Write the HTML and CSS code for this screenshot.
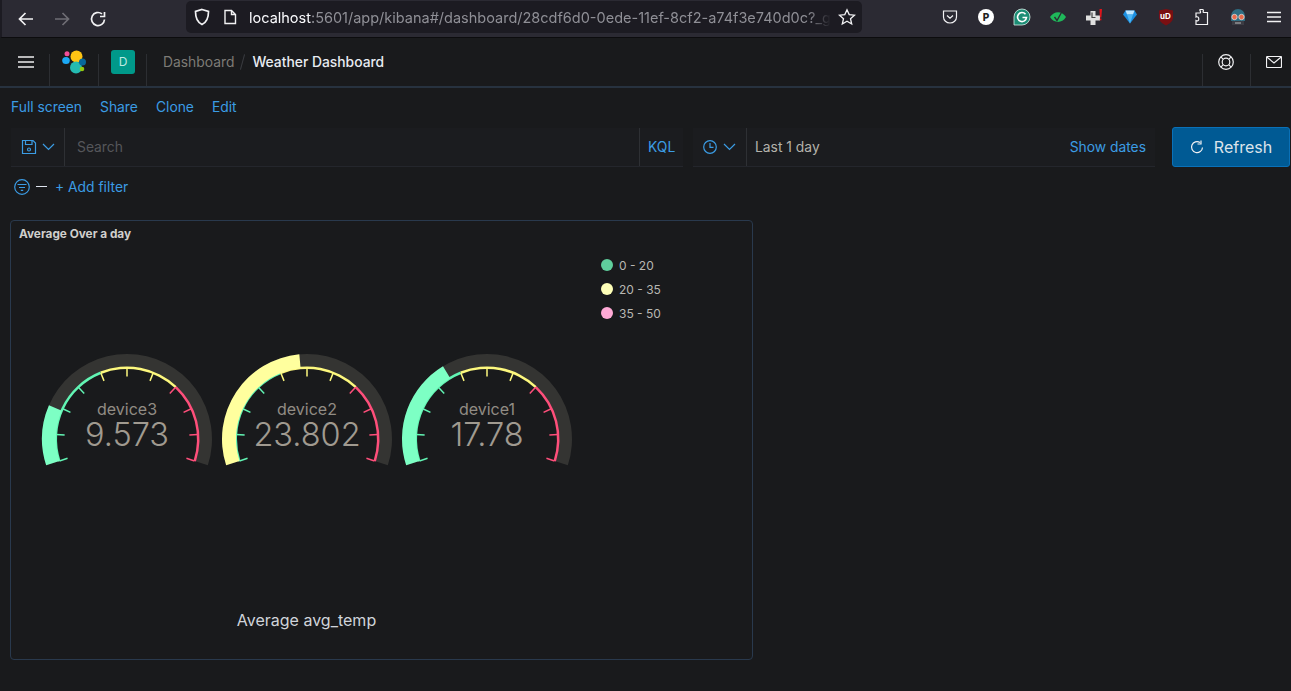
FILE: index.html
```html
<!DOCTYPE html>
<html lang="en">
<head>
    <meta charset="UTF-8">
    <title>Weather Dashboard - Kibana</title>
    <link rel="stylesheet" href="styles.css">
</head>
<body>

<!-- Browser toolbar -->
<div class="browser-bar">
    <div class="nav-btn"><svg width="18" height="18" viewBox="0 0 18 18" class="ico"><path d="M16 9H2.500M8.500 3 2.500 9l6 6"/></svg></div>
    <div class="nav-btn dim"><svg width="18" height="18" viewBox="0 0 18 18" class="ico"><path d="M2 9h13.500M9.500 3l6 6-6 6"/></svg></div>
    <div class="nav-btn"><svg width="18" height="18" viewBox="0 0 18 18" class="ico"><path d="M15.500 9.500A6.500 6.500 0 1 1 13 3.900M15.500 2v4.500H11"/></svg></div>
    <div class="url-bar">
        <svg width="16" height="18" viewBox="0 0 16 18" class="ico shield"><path d="M8 1.500 14.500 3.500c0 6-1 10.500-6.500 13C2.500 14 1.500 9.500 1.500 3.500z"/></svg>
        <svg width="14" height="16" viewBox="0 0 14 16" class="ico page"><path d="M2 1.500h6.500L12.500 5.500v9H2zM8.500 1.500v4h4"/></svg>
        <span class="url-text">localhost<span class="url-rest">:5601/app/kibana#/dashboard/28cdf6d0-0ede-11ef-8cf2-a74f3e740d0c?_g</span></span>
        <svg width="18" height="18" viewBox="0 0 18 18" class="ico star"><path d="M9 1.800 11.200 6.600 16.500 7.200 12.500 10.700 13.700 16 9 13.300 4.300 16 5.500 10.700 1.500 7.200 6.800 6.600z"/></svg>
    </div>
    <div class="extensions">
        <div class="nav-btn"><svg width="16" height="16" viewBox="0 0 16 16" class="ico thin"><path d="M1.500 2h13v6a6.500 6 0 0 1-13 0zM5 6.500l3 2.800 3-2.800"/></svg></div>
        <div class="nav-btn"><span class="ext-p">P</span></div>
        <div class="nav-btn"><svg width="18" height="18" viewBox="0 0 18 18"><path d="M1 9a8 8 0 1 1 8 8H1z" fill="#1c8d75" stroke="#d8efe8" stroke-width=".8"/><path d="M12.500 6.200A4.500 4.500 0 1 0 13.500 9.500H9.500" fill="none" stroke="#fff" stroke-width="1.600"/></svg></div>
        <div class="nav-btn"><svg width="18" height="14" viewBox="0 0 18 14"><path d="M1 7c4-6.500 12-6.500 16 0-4 6.500-12 6.500-16 0z" fill="#1fb85a"/><path d="M5.500 7 8 10.500 13 1.500" fill="none" stroke="#2b2a33" stroke-width="1.300"/></svg></div>
        <div class="nav-btn"><svg width="18" height="18" viewBox="0 0 18 18"><path d="M5.500 3h5v4.500H15v5h-4.500V17h-5v-4.500H1v-5h4.500z" fill="#e0e0e0"/><path d="M7 4.500v5h3.500" fill="none" stroke="#444" stroke-width="1.200"/><path d="M14.500 1h2.500l-.6 8.500h-1.500z" fill="#e0141b"/><path d="M14.800 10.500h1.600v1.800h-1.600z" fill="#e0141b"/></svg></div>
        <div class="nav-btn"><svg width="16" height="16" viewBox="0 0 16 16"><path d="M3.500 1.500h9L15 5.500 8 14.500 1 5.500z" fill="#1c8fe0"/><path d="M3.500 1.500h9L11 5.500H5z" fill="#bfe6ff"/><path d="M5 5.500h6L8 14.500z" fill="#4fb8f5"/></svg></div>
        <div class="nav-btn"><svg width="16" height="18" viewBox="0 0 16 18"><path d="M8 1 15 2.500V10c0 3-3.500 5.800-7 7.500C4.500 15.800 1 13 1 10V2.500z" fill="#7a0f12"/></svg><span class="ext-ub">uD</span></div>
        <div class="nav-btn"><svg width="18" height="18" viewBox="0 0 18 18" class="ico thin"><path d="M7 1.500h2.500c1 0 1 1 .7 1.700-.4 1 .2 1.300 1 1.300h3.300v12H3v-4c1.300.7 2.800.3 2.800-1.500S4.300 8.300 3 9V5h3.500c1 0 1.300-.5 1-1.300C7.200 3 6.500 1.500 7 1.500z"/></svg></div>
        <div class="nav-btn"><svg width="18" height="20" viewBox="0 0 18 20"><path d="M2 9a7 7 0 0 1 14 0v5H2z" fill="#2f6d82"/><circle cx="5.500" cy="10" r="2.700" fill="#e86a4a" stroke="#ddd" stroke-width=".8"/><circle cx="12.500" cy="10" r="2.700" fill="#e86a4a" stroke="#ddd" stroke-width=".8"/><path d="M3 14h12v4H3z" fill="#3c3c44"/><path d="M6 16h6" stroke="#bbb"/></svg></div>
        <div class="nav-btn"><svg width="14" height="12" viewBox="0 0 14 12" class="ico menu-ico"><path d="M0 1.500h14M0 6h14M0 10.500h14"/></svg></div>
    </div>
</div>

<!-- Kibana header -->
<div class="app-header">
    <div class="head-cell menu-cell"><svg width="16" height="12" viewBox="0 0 16 12"><path d="M0 1h16M0 6h16M0 11h16" stroke="#eee" stroke-width="1.600"/></svg></div>
    <div class="head-cell logo-cell">
        <svg width="24" height="24" viewBox="0 0 24 24">
            <circle cx="14.500" cy="6.500" r="6" fill="#fec514"/>
            <circle cx="14" cy="17.500" r="6" fill="#24bbb1"/>
            <circle cx="5" cy="3.800" r="2.500" fill="#f04e98"/>
            <ellipse cx="4" cy="10.500" rx="3.800" ry="3.500" fill="#1ba9f5"/>
            <ellipse cx="20.500" cy="12" rx="3.500" ry="3.500" fill="#07689a"/>
            <circle cx="20" cy="19" r="2.300" fill="#93c90e"/>
        </svg>
    </div>
    <div class="head-cell space-cell"><span class="space-badge">D</span></div>
    <nav class="crumbs">
        <a class="crumb-link">Dashboard</a>
        <span class="crumb-sep"></span>
        <span class="crumb-now">Weather Dashboard</span>
    </nav>
    <div class="head-cell right"><svg width="16" height="16" viewBox="0 0 16 16" class="ico thin"><circle cx="8" cy="8" r="7.300"/><circle cx="8" cy="8" r="3.800"/><path d="m2.800 2.800 2.500 2.500M13.200 2.800l-2.500 2.500M2.800 13.200l2.500-2.500M13.200 13.200l-2.500-2.500"/></svg></div>
    <div class="head-cell right last"><svg width="16" height="12" viewBox="0 0 16 12" class="ico thin"><rect x=".5" y=".5" width="15" height="11" rx="1"/><path d="m.8 1 7.200 6 7.200-6"/></svg></div>
</div>

<!-- Top nav links -->
<div class="top-links">
    <a>Full screen</a>
    <a>Share</a>
    <a>Clone</a>
    <a>Edit</a>
</div>

<!-- Query bar -->
<div class="query-bar">
    <div class="query-form">
        <div class="saved-btn">
            <svg width="16" height="16" viewBox="0 0 16 16" class="blue-ico"><path d="M1.500 1.500h10.500l2.500 2.500v10.500h-13zM4.500 1.500v4h6.500v-4"/><circle cx="8" cy="10.500" r="1.500"/></svg>
            <svg width="13" height="8" viewBox="0 0 13 8" class="blue-ico"><path d="m1 1 5.500 5.500L12 1"/></svg>
        </div>
        <div class="search-text">Search</div>
        <div class="kql">KQL</div>
    </div>
    <div class="date-form">
        <div class="date-btn">
            <svg width="14" height="14" viewBox="0 0 14 14" class="blue-ico"><circle cx="7" cy="7" r="6.300"/><path d="M7 3v4.300h3.500"/></svg>
            <svg width="13" height="8" viewBox="0 0 13 8" class="blue-ico"><path d="m1 1 5.500 5.500L12 1"/></svg>
        </div>
        <div class="date-text">Last 1 day</div>
        <a class="show-dates">Show dates</a>
    </div>
    <button class="refresh-btn">
        <svg width="14" height="14" viewBox="0 0 14 14" class="ico thin"><path d="M12.500 7.500A5.500 5.500 0 1 1 10 2.500M11 .5v3.500H7.500"/></svg>
        Refresh
    </button>
</div>

<!-- Filter row -->
<div class="filter-row">
    <svg width="16" height="16" viewBox="0 0 16 16" class="blue-ico"><circle cx="8" cy="8" r="7.300"/><path d="M3.500 5.500h9M5 8.500h6M6.800 11.300h2.400"/></svg>
    <span class="filter-dash"></span>
    <a class="add-filter">+ Add filter</a>
</div>

<!-- Panel -->
<div class="panel">
    <div class="panel-title">Average Over a day</div>
    <div class="vis">
        <div class="vis-chart">
            <div class="gauges" id="gauges"></div>
            <div class="gauge-caption">Average avg_temp</div>
        </div>
        <ul class="legend">
            <li><i class="dot green"></i>0 - 20</li>
            <li><i class="dot yellow"></i>20 - 35</li>
            <li><i class="dot pink"></i>35 - 50</li>
        </ul>
    </div>
</div>

<script src="gauges.js"></script>
</body>
</html>
```

FILE: styles.css
```css
/* Global styles */
body {
    margin: 0;
    background: #191a1c;
    font-family: 'Inter', 'Liberation Sans', sans-serif;
    font-size: 13.850px;
    color: #dfe5ef;
    overflow: hidden;
    height: 691px;
}

a {
    color: #3b9ce4;
}

.ico {
    fill: none;
    stroke: #f2f2f4;
    stroke-width: 1.7;
}

.ico.thin {
    stroke-width: 1.2;
}

.blue-ico {
    fill: none;
    stroke: #3b9ce4;
    stroke-width: 1.2;
}

/* Browser toolbar */
.browser-bar {
    height: 37px;
    display: flex;
    align-items: center;
    padding-left: 6px;
    background: #2b2a33;
    border-left: 2px solid #1c1b22;
    border-bottom: 1px solid #0c0c0e;
}

.nav-btn {
    width: 36px;
    height: 36px;
    flex: none;
    display: flex;
    align-items: center;
    justify-content: center;
    position: relative;
}

.nav-btn.dim .ico {
    stroke: #6f6e75;
}

.menu-ico {
    stroke-width: 1.4;
}

.url-bar {
    width: 676px;
    height: 32px;
    margin-left: 70px;
    flex: none;
    display: flex;
    align-items: center;
    background: #1c1b22;
    border-radius: 5px;
    box-sizing: border-box;
    padding-left: 8px;
    margin-top: -3px;
}

.shield {
    margin-right: 13px;
}

.page {
    margin-right: 12px;
    stroke-width: 1.4;
}

.url-text {
    width: 582px;
    overflow: hidden;
    white-space: nowrap;
    font-size: 14.500px;
    color: #fbfbfe;
    mask-image: linear-gradient(to right, #000 96%, transparent 100%);
}

.url-rest {
    color: #8f8f96;
}

.star {
    margin-left: 7px;
    stroke-width: 1.3;
}

.extensions {
    display: flex;
    margin-left: 70px;
    margin-top: -3px;
}

.ext-p {
    width: 16px;
    height: 16px;
    border-radius: 50%;
    background: #fff;
    color: #222;
    font-size: 10px;
    font-weight: 800;
    line-height: 16px;
    text-align: center;
}

.ext-ub {
    position: absolute;
    top: 12px;
    left: 12px;
    font-size: 8px;
    font-weight: 700;
    color: #fff;
}

/* Kibana header */
.app-header {
    height: 48px;
    display: flex;
    background: #191a1c;
    border-bottom: 2px solid #27323f;
}

.head-cell {
    width: 49px;
    flex: none;
    display: flex;
    align-items: center;
    justify-content: center;
    box-sizing: border-box;
    background: linear-gradient(#2c2e32, #2c2e32) right bottom / 1px 32px no-repeat;
}

.head-cell.right {
    width: 48px;
    background-position: left bottom;
}

.menu-cell {
    width: 50px;
    padding-left: 2px;
}

.logo-cell {
    padding-right: 2px;
}

.space-cell {
    width: 48px;
}

.head-cell.last {
    width: 41px;
    padding-left: 7px;
}

.space-badge {
    width: 24px;
    height: 24px;
    border-radius: 3px;
    background: #00998a;
    color: #bfe9e2;
    font-size: 12px;
    line-height: 24px;
    text-align: center;
}

.crumbs {
    flex: 1;
    display: flex;
    align-items: center;
    padding: 0 0 1px 16px;
}

.crumb-link {
    color: #7d7b76;
}

.crumb-sep {
    width: 1px;
    height: 16px;
    margin: 0 9px 0 8px;
    background: #3a3c40;
    transform: rotate(15deg);
}

.crumb-now {
    color: #e8ecf2;
    font-weight: 500;
}

/* Top nav links */
.top-links {
    display: flex;
    gap: 18px;
    padding: 11px 0 0 11px;
    height: 27px;
    line-height: 17px;
}

/* Query bar */
.query-bar {
    display: flex;
    height: 40px;
    padding-left: 11px;
    margin-top: 2px;
}

.query-form {
    width: 672px;
    height: 39px;
    display: flex;
    align-items: center;
    background: #1b1c1f;
    border-bottom: 1px solid #24262c;
    box-sizing: border-box;
}

.saved-btn {
    width: 54px;
    height: 100%;
    flex: none;
    display: flex;
    align-items: center;
    gap: 5px;
    padding-left: 10px;
    box-sizing: border-box;
    border-right: 1px solid #2e3034;
}

.search-text {
    flex: 1;
    padding-left: 12px;
    color: #55565a;
}

.kql {
    width: 44px;
    height: 100%;
    line-height: 38px;
    padding-left: 8px;
    box-sizing: border-box;
    border-left: 1px solid #2e3034;
    color: #3b9ce4;
}

.date-form {
    width: 462px;
    height: 39px;
    margin-left: 10px;
    display: flex;
    align-items: center;
    background: #1b1c1f;
    border-bottom: 1px solid #24262c;
    box-sizing: border-box;
}

.date-btn {
    width: 54px;
    height: 100%;
    flex: none;
    display: flex;
    align-items: center;
    gap: 6px;
    padding-left: 10px;
    box-sizing: border-box;
    border-right: 1px solid #2e3034;
}

.date-text {
    flex: 1;
    padding-left: 8px;
    color: #b4b2ab;
}

.show-dates {
    padding-right: 9px;
}

.refresh-btn {
    width: 118px;
    height: 40px;
    margin: -1px 0 0 17px;
    display: flex;
    align-items: center;
    justify-content: center;
    gap: 10px;
    padding: 0;
    background: #005a94;
    border: 1px solid #0a71b8;
    border-radius: 3px;
    color: #dce3ea;
    font-family: inherit;
    font-size: 16px;
}

/* Filter row */
.filter-row {
    display: flex;
    align-items: center;
    height: 37px;
    padding-left: 14px;
}

.filter-dash {
    width: 11px;
    height: 1px;
    margin: 0 8px 0 6px;
    background: #dfe5ef;
}

/* Panel */
.panel {
    width: 743px;
    height: 440px;
    margin: 15px 0 0 10px;
    border: 1px solid #29394d;
    border-radius: 4px;
    box-sizing: border-box;
    display: flex;
    flex-direction: column;
}

.panel-title {
    padding: 6px 8px 0;
    font-size: 11.800px;
    font-weight: 700;
    line-height: 14px;
    color: #d0cfcc;
}

.vis {
    flex: 1;
    display: flex;
}

.vis-chart {
    width: 590px;
    flex: none;
    display: flex;
    flex-direction: column;
    align-items: center;
}

.gauges {
    display: flex;
    align-self: flex-start;
    width: 540px;
    margin: 109px 0 0 26px;
}

.gauge {
    display: block;
    width: 180px;
    height: 125px;
}

.gauge-label {
    fill: #918c84;
    font-size: 16px;
    text-anchor: middle;
}

.gauge-value {
    fill: #a09a90;
    font-size: 32.500px;
    font-weight: 300;
    text-anchor: middle;
}

.gauge-caption {
    margin: 135px 0 0 1px;
    font-size: 16px;
    line-height: 20px;
    color: #d0d4da;
}

.legend {
    list-style: none;
    margin: 12px 0 0;
    padding: 0;
    font-size: 12px;
    color: #b8b7b2;
}

.legend li {
    display: flex;
    align-items: center;
    height: 24px;
    gap: 6px;
}

.dot {
    width: 12px;
    height: 12px;
    border-radius: 50%;
}

.dot.green {
    background: #5fcf9c;
}

.dot.yellow {
    background: #feffb8;
}

.dot.pink {
    background: #ffaad6;
}
```

FILE: gauges.js
```js
// Gauge config, same scale for every device
const MAX = 50;
const SWEEP = 108; // degrees either side of the top
const CX = 90;
const CY = 89;

const bands = [
    { from: 0, to: 20, color: '#62f5b4', fill: '#7dffc4' },
    { from: 20, to: 35, color: '#fdf87e', fill: '#ffff9e' },
    { from: 35, to: 50, color: '#ff4f7b', fill: '#ff6f94' }
];

const devices = [
    { name: 'device3', value: 9.573, text: '9.573' },
    { name: 'device2', value: 23.802, text: '23.802' },
    { name: 'device1', value: 17.78, text: '17.78' }
];

function angleOf(value) {
    return -SWEEP + (value / MAX) * SWEEP * 2;
}

function point(r, deg) {
    const a = deg * Math.PI / 180;
    return (CX + r * Math.sin(a)).toFixed(2) + ' ' + (CY - r * Math.cos(a)).toFixed(2);
}

function arc(r0, r1, from, to, color) {
    const large = to - from > 180 ? 1 : 0;
    const d = 'M' + point(r1, from) +
        'A' + r1 + ' ' + r1 + ' 0 ' + large + ' 1 ' + point(r1, to) +
        'L' + point(r0, to) +
        'A' + r0 + ' ' + r0 + ' 0 ' + large + ' 0 ' + point(r0, from) + 'Z';
    return `<path d="${d}" fill="${color}"/>`;
}

function bandOf(value) {
    return bands.find(b => value < b.to || b.to === MAX);
}

function gauge(device) {
    let svg = `<svg class="gauge" viewBox="0 0 180 125">`;
    svg += arc(72, 85, -SWEEP, SWEEP, '#343432');

    bands.forEach(b => {
        svg += arc(70, 72.5, angleOf(b.from), angleOf(b.to), b.color);
    });

    for (let v = 0; v <= MAX; v += 5) {
        const deg = angleOf(v);
        svg += `<path d="M${point(71, deg)}L${point(62.5, deg)}" stroke="${bandOf(v).color}" stroke-width="1.5"/>`;
    }

    svg += arc(71, 85, -SWEEP, angleOf(device.value), bandOf(device.value).fill);
    svg += `<text class="gauge-label" x="${CX}" y="65">${device.name}</text>`;
    svg += `<text class="gauge-value" x="${CX}" y="96">${device.text}</text>`;
    return svg + '</svg>';
}

document.getElementById('gauges').innerHTML = devices.map(gauge).join('');
```
